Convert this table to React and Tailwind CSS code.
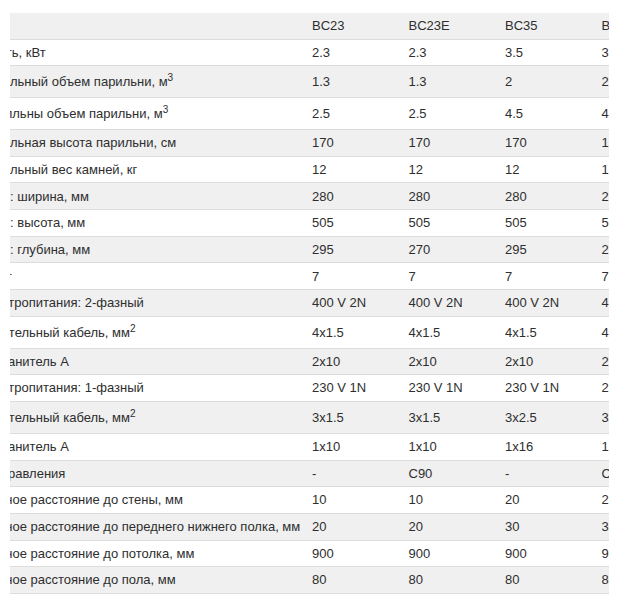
import React from 'react';

const models = ['BC23', 'BC23E', 'BC35', 'BC35E', 'BC50'];

const rows = [
  { label: 'Мощность, кВт', values: ['2.3', '2.3', '3.5', '3.5', '5'] },
  { label: 'Максимальный объем парильни, м', sup: '3', values: ['1.3', '1.3', '2', '2', '3'] },
  { label: 'Минималльны объем парильни, м', sup: '3', values: ['2.5', '2.5', '4.5', '4.5', '6'] },
  { label: 'Максимальная высота парильни, см', values: ['170', '170', '170', '170', '170'] },
  { label: 'Максимальный вес камней, кг', values: ['12', '12', '12', '12', '20'] },
  { label: 'Размеры: ширина, мм', values: ['280', '280', '280', '280', '280'] },
  { label: 'Размеры: высота, мм', values: ['505', '505', '505', '505', '505'] },
  { label: 'Размеры: глубина, мм', values: ['295', '270', '295', '270', '295'] },
  { label: 'Масса, кг', values: ['7', '7', '7', '7', '8'] },
  { label: 'Тип электропитания: 2-фазный', values: ['400 V 2N', '400 V 2N', '400 V 2N', '400 V 2N', '400 V 3N'] },
  { label: 'Соединительный кабель, мм', sup: '2', values: ['4x1.5', '4x1.5', '4x1.5', '4x1.5', '5x1.5'] },
  { label: 'Предохранитель А', values: ['2x10', '2x10', '2x10', '2x10', '3x10'] },
  { label: 'Тип электропитания: 1-фазный', values: ['230 V 1N', '230 V 1N', '230 V 1N', '230 V 1N', '-'] },
  { label: 'Соединительный кабель, мм', sup: '2', values: ['3x1.5', '3x1.5', '3x2.5', '3x2.5', '-'] },
  { label: 'Предохранитель А', values: ['1x10', '1x10', '1x16', '1x16', '-'] },
  { label: 'Пульт управления', values: ['-', 'C90', '-', 'C90', '-'] },
  { label: 'Безопасное расстояние до стены, мм', values: ['10', '10', '20', '20', '20'] },
  { label: 'Безопасное расстояние до переднего нижнего полка, мм', values: ['20', '20', '30', '30', '30'] },
  { label: 'Безопасное расстояние до потолка, мм', values: ['900', '900', '900', '900', '900'] },
  { label: 'Безопасное расстояние до пола, мм', values: ['80', '80', '80', '80', '80'] },
];

export default function App() {
  return (
    <div className="w-[620px] h-[610px] bg-white pt-[13px]" style={{ fontFamily: '"Liberation Sans", Arial, sans-serif' }}>
      <div className="ml-[10px] w-[599px] overflow-hidden">
        <table className="table-fixed border-separate border-spacing-0 -ml-[61px] w-[840px] text-[13px] text-[#2e2e2e]">
          <colgroup>
            <col className="w-[356px]" />
            <col className="w-[96.5px]" />
            <col className="w-[96.5px]" />
            <col className="w-[96.5px]" />
            <col className="w-[96.5px]" />
            <col className="w-[98px]" />
          </colgroup>
          <thead>
            <tr className="bg-[#f0f0f0]">
              <th className="h-[26.5px] px-[7px] py-0 border-b border-[#dcdcdc]" />
              {models.map(m => (
                <th key={m} className="h-[26.5px] px-[7px] py-0 text-left font-normal border-b border-[#dcdcdc] whitespace-nowrap">
                  {m}
                </th>
              ))}
            </tr>
          </thead>
          <tbody>
            {rows.map((r, i) => {
              const h = r.sup ? 'h-[32px]' : 'h-[26.67px]';
              const bg = i % 2 === 0 ? 'bg-white' : 'bg-[#f0f0f0]';
              return (
                <tr key={i} className={bg}>
                  <td className={`${h} px-[7px] py-0 border-b border-[#dcdcdc] whitespace-nowrap overflow-hidden`}>
                    {r.label}
                    {r.sup && <sup className="text-[10px]">{r.sup}</sup>}
                  </td>
                  {r.values.map((v, j) => (
                    <td key={j} className={`${h} px-[7px] py-0 border-b border-[#dcdcdc] whitespace-nowrap`}>
                      {v}
                    </td>
                  ))}
                </tr>
              );
            })}
          </tbody>
        </table>
      </div>
    </div>
  );
}
